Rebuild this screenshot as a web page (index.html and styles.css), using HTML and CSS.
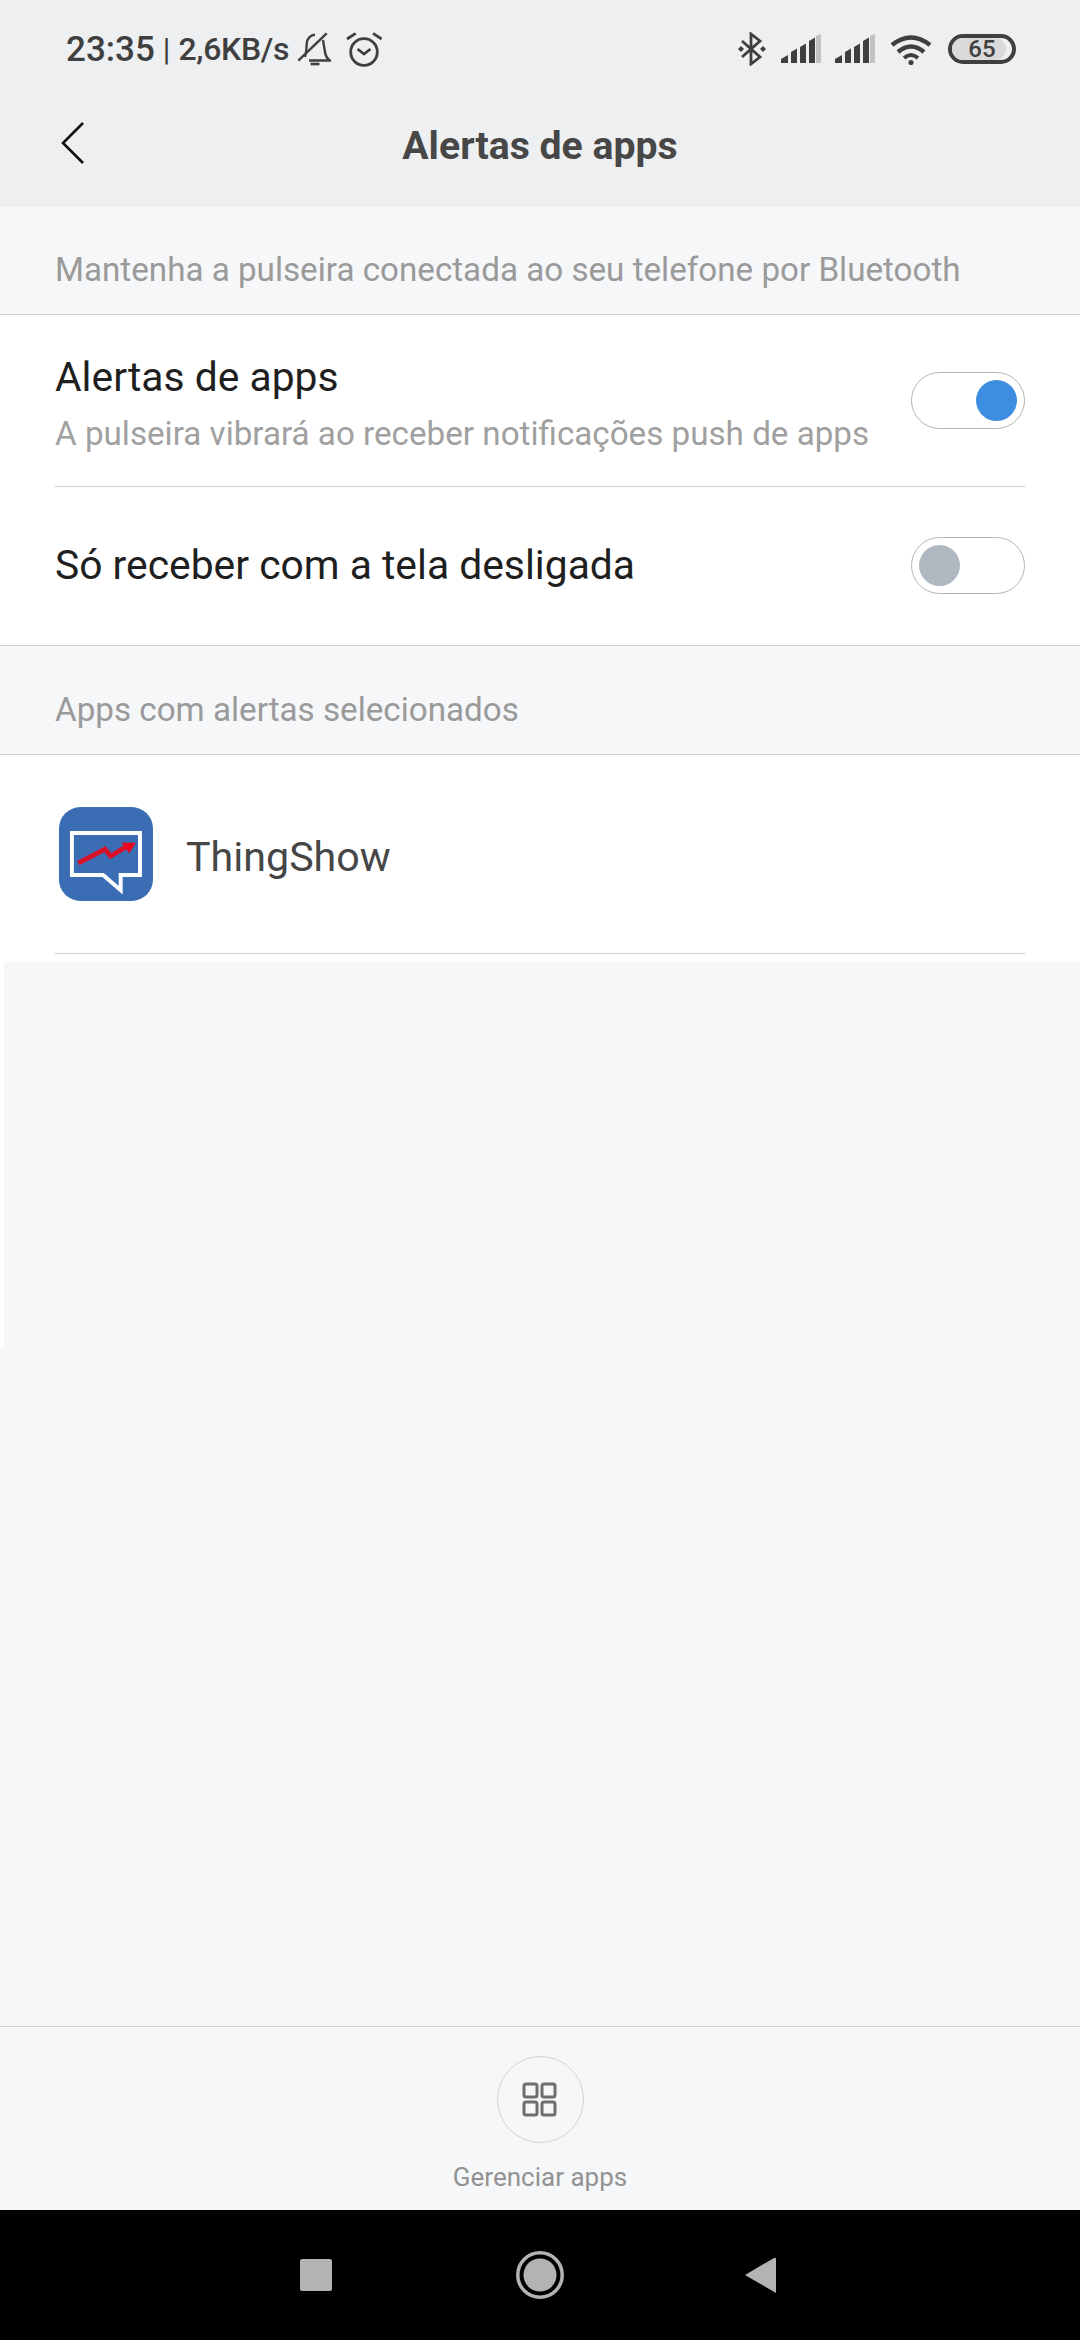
FILE: index.html
```html
<!DOCTYPE html>
<html lang="pt">
<head>
    <meta charset="UTF-8">
    <meta name="viewport" content="width=device-width, initial-scale=1.0">
    <title>Alertas de apps</title>
    <link rel="stylesheet" href="styles.css">
</head>
<body>

<div class="screen">
    <div class="top">
        <div class="status">
            <div class="status-left">
                <span class="time">23:35</span>
                <span class="sep">|</span>
                <span class="speed">2,6KB/s</span>
                <svg class="ic-bell" width="34" height="36" viewBox="0 0 34 36" fill="none" stroke="#3f3f3f" stroke-width="2.4">
                    <path d="M8 26C9.500 21 9.500 17 9.700 13 10 7 14 3.700 18 3.700"/>
                    <path d="M26 9l2 12c.5 4 2 6.500 5 8.500H12"/>
                    <path d="M1.300 29.700L29.700 2.300"/>
                    <path d="M13.500 33h9" stroke-width="2.600"/>
                </svg>
                <svg class="ic-alarm" width="36" height="36" viewBox="0 0 36 36" fill="none" stroke="#3f3f3f" stroke-width="2.800">
                    <circle cx="18" cy="21" r="13.300"/>
                    <path d="M11.500 18l6.500 5 6.500-5"/>
                    <path d="M1 8l8.700-5.700M27 2.300L35.700 8"/>
                </svg>
            </div>
            <div class="status-right">
                <svg class="ic-bt" width="30" height="34" viewBox="0 0 30 34" fill="none" stroke="#3f3f3f" stroke-width="2.800">
                    <path d="M5 9l18 16-9 7V2l9 7L5 25"/>
                    <path d="M1 17l3 3 3-3-3-3z" fill="#3f3f3f" stroke="none"/>
                    <path d="M23 17l3 3 3-3-3-3z" fill="#3f3f3f" stroke="none"/>
                </svg>
                <svg class="ic-signal" width="40" height="30" viewBox="0 0 40 30">
                    <path d="M0 29v-4l7-4v8zM10 29V18l6-3.500V29zM19 29V13l6-3.500V29zM28 29V7l6-3.500V29z" fill="#3f3f3f"/>
                    <path d="M35 29V2l5-2v29z" fill="#c2c2c2"/>
                </svg>
                <svg class="ic-signal" width="40" height="30" viewBox="0 0 40 30">
                    <path d="M0 29v-4l7-4v8zM10 29V18l6-3.500V29zM19 29V13l6-3.500V29zM28 29V7l6-3.500V29z" fill="#3f3f3f"/>
                    <path d="M35 29V2l5-2v29z" fill="#c2c2c2"/>
                </svg>
                <svg class="ic-wifi" width="44" height="32" viewBox="0 0 44 32" fill="none" stroke="#3f3f3f" stroke-width="4.500">
                    <path d="M3 12Q22-3 41 12"/>
                    <path d="M9 19Q22 8 35 19"/>
                    <path d="M15 25Q22 19 29 25" stroke-width="4"/>
                    <circle cx="22" cy="29.500" r="2.600" fill="#3f3f3f" stroke="none"/>
                </svg>
                <div class="battery">
                    <div class="battery-fill"></div>
                    <span class="battery-num">65</span>
                </div>
            </div>
        </div>
        <div class="titlebar">
            <svg class="ic-back" width="24" height="44" viewBox="0 0 24 44" fill="none" stroke="#111" stroke-width="2.600">
                <path d="M22 2L2 22l20 20"/>
            </svg>
            <h1 class="title">Alertas de apps</h1>
        </div>
    </div>

    <div class="hint hint-first">Mantenha a pulseira conectada ao seu telefone por Bluetooth</div>

    <div class="group">
        <div class="row row-tall">
            <div class="row-text">
                <div class="row-title">Alertas de apps</div>
                <div class="row-sub">A pulseira vibrará ao receber notificações push de apps</div>
            </div>
            <div class="switch on"><div class="knob"></div></div>
        </div>
        <div class="row row-short">
            <div class="row-text">
                <div class="row-title">Só receber com a tela desligada</div>
            </div>
            <div class="switch"><div class="knob"></div></div>
        </div>
    </div>

    <div class="hint hint-second">Apps com alertas selecionados</div>

    <div class="group app-group">
        <div class="app-row">
            <svg class="app-icon" width="94" height="94" viewBox="0 0 96 96">
                <rect width="96" height="96" rx="22" fill="#3a6db3"/>
                <path d="M13.200 26.500H82.700V69.500H63V85L45 69.500H13.200z" fill="none" stroke="#fff" stroke-width="4"/>
                <path d="M19.700 57.400L47 42.900l5.700 7.300L70.700 39.500" fill="none" stroke="#d8102a" stroke-width="5"/>
                <path d="M63.900 36.400H78.500L71.700 47.200z" fill="#e8061f"/>
            </svg>
            <span class="app-name">ThingShow</span>
        </div>
    </div>

    <div class="empty"><div class="edge"></div></div>

    <div class="manage">
        <div class="manage-btn">
            <svg width="36" height="36" viewBox="0 0 36 36" fill="none" stroke="#6e6e6e" stroke-width="3">
                <rect x="2" y="2" width="13" height="13" rx="2"/>
                <rect x="20" y="2" width="13" height="13" rx="2"/>
                <rect x="2" y="20" width="13" height="13" rx="2"/>
                <rect x="20" y="20" width="13" height="13" rx="2"/>
            </svg>
        </div>
        <div class="manage-label">Gerenciar apps</div>
    </div>

    <div class="navbar">
        <svg width="32" height="32" viewBox="0 0 32 32"><rect width="32" height="32" rx="2" fill="#b3b3b3"/></svg>
        <svg class="nav-home" width="48" height="48" viewBox="0 0 48 48" fill="none">
            <circle cx="24" cy="24" r="22.200" stroke="#b3b3b3" stroke-width="3.500"/>
            <circle cx="24" cy="24" r="16.500" fill="#b3b3b3"/>
        </svg>
        <svg width="31" height="36" viewBox="0 0 31 36"><path d="M0 18L29 1q2-1 2 1v34z" fill="#b3b3b3"/></svg>
    </div>
</div>

</body>
</html>
```

FILE: styles.css
```css
* {
    box-sizing: border-box;
}
body {
    margin: 0;
    font-family: Roboto, "Noto Sans", sans-serif;
    background: #f6f7f9;
}
svg {
    display: block;
    flex-shrink: 0;
}
.screen {
    width: 1080px;
    height: 2340px;
    display: flex;
    flex-direction: column;
    overflow: hidden;
}

/* status + title */
.top {
    height: 207px;
    background: #eeeff1;
}
.status {
    height: 98px;
    padding: 0 64px 0 66px;
    display: flex;
    justify-content: space-between;
    align-items: center;
    color: #3f3f3f;
}
.status-left {
    display: flex;
    align-items: center;
    height: 40px;
}
.time {
    font-size: 35px;
    font-weight: 500;
}
.sep {
    font-size: 31px;
    margin: 0 8px;
}
.speed {
    font-size: 32px;
    font-weight: 500;
    letter-spacing: -0.3px;
}
.ic-bell {
    margin-left: 8px;
}
.ic-alarm {
    margin-left: 15px;
}
.status-right {
    display: flex;
    align-items: center;
    gap: 14px;
}
.battery {
    width: 68px;
    height: 30px;
    margin-left: 1px;
    border: 4px solid #3f3f3f;
    border-radius: 15px;
    position: relative;
    overflow: hidden;
    display: flex;
    align-items: center;
    justify-content: center;
}
.battery-fill {
    position: absolute;
    left: 0;
    top: 0;
    bottom: 0;
    width: 90%;
    background: #dadada;
    border-radius: 0 12px 12px 0;
}
.battery-num {
    position: relative;
    font-size: 24px;
    font-weight: 500;
}
.titlebar {
    height: 92px;
    padding-top: 4px;
    position: relative;
    display: flex;
    align-items: center;
    justify-content: center;
}
.ic-back {
    position: absolute;
    left: 61px;
    top: 23px;
}
.title {
    margin: 0;
    font-size: 39.2px;
    font-weight: 700;
    color: #474747;
}

/* section hints */
.hint {
    font-size: 33.2px;
    color: #9a9a9a;
    padding: 18px 0 0 55px;
    display: flex;
    align-items: center;
    border-bottom: 1px solid #cfcfcf;
}
.hint-first {
    height: 108px;
}
.hint-second {
    height: 109px;
}

/* rows */
.group {
    background: #fff;
    padding: 0 55px;
    border-bottom: 1px solid #cfcfcf;
}
.row {
    display: flex;
    justify-content: space-between;
    align-items: center;
}
.row-tall {
    height: 172px;
    border-bottom: 1px solid #cfcfcf;
}
.row-tall .row-text {
    margin-top: 5px;
}
.row-short {
    height: 158px;
}
.row-short .row-text {
    margin-bottom: 3px;
}
.row-short .switch {
    margin-bottom: 2px;
}
.row-title {
    font-size: 40.8px;
    color: #1f1f1f;
}
.row-sub {
    font-size: 33.2px;
    color: #a0a0a0;
    margin-top: 13px;
}
.switch {
    width: 114px;
    height: 57px;
    border: 1.5px solid #b5b5b5;
    border-radius: 29px;
    display: flex;
    align-items: center;
    padding: 0 7px;
}
.switch.on {
    justify-content: flex-end;
}
.knob {
    width: 41px;
    height: 41px;
    border-radius: 50%;
    background: #afb8c1;
}
.switch.on .knob {
    background: #3d8de0;
}

/* app list */
.app-group {
    height: 207px;
    border-bottom: 8px solid #fff;
}
.app-row {
    height: 199px;
    display: flex;
    align-items: center;
    padding-left: 4px;
    border-bottom: 1px solid #cfcfcf;
}
.app-name {
    font-size: 41.2px;
    color: #464646;
    margin: 6px 0 0 33px;
}
.empty {
    flex: 1;
}
.edge {
    width: 4px;
    height: 386px;
    background: #fff;
}

/* bottom action */
.manage {
    height: 184px;
    border-top: 1px solid #cfcfcf;
    display: flex;
    flex-direction: column;
    align-items: center;
    padding-top: 29px;
}
.manage-btn {
    width: 87px;
    height: 87px;
    border: 1.5px solid #d2d2d2;
    border-radius: 50%;
    display: flex;
    align-items: center;
    justify-content: center;
}
.manage-label {
    font-size: 26px;
    color: #929292;
    margin-top: 19px;
}

.navbar {
    height: 130px;
    background: #000;
    display: flex;
    align-items: center;
    padding-left: 300px;
}
.nav-home {
    margin: 0 181px 0 184px;
}
```
